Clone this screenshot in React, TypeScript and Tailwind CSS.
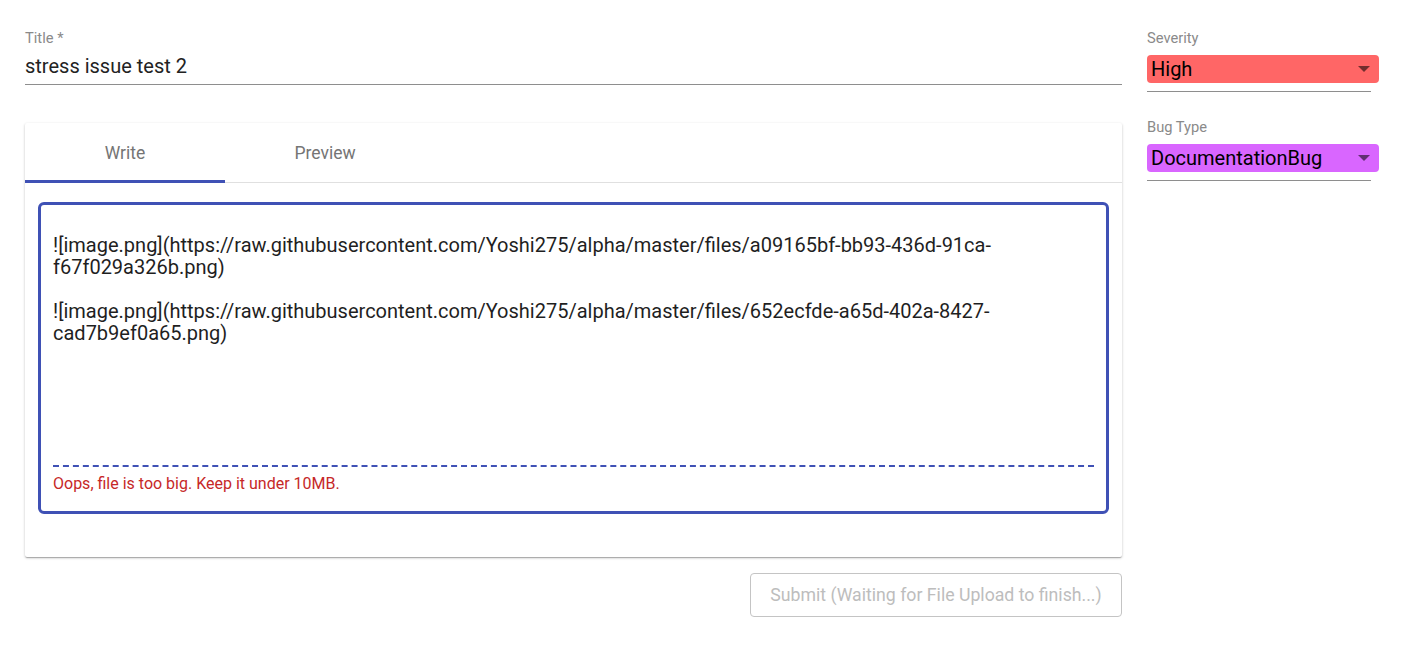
import { useState } from "react";

const font = { fontFamily: "Roboto, 'Liberation Sans', sans-serif" };

function Caret() {
  return (
    <svg width="12" height="6" viewBox="0 0 12 6" className="fill-black/55">
      <path d="M0 0 L12 0 L6 6 Z" />
    </svg>
  );
}

function SelectField({ label, value, bg }: { label: string; value: string; bg: string }) {
  return (
    <div className="flex flex-col w-[232px]">
      <div className="text-[14.7px] leading-[16px] text-[#8a8a8a]">{label}</div>
      <div
        className={`mt-[9px] flex items-center justify-between h-[28px] rounded-[4px] pl-[4px] pr-[9px] ${bg}`}
      >
        <span className="text-[20px] text-black leading-none">{value}</span>
        <Caret />
      </div>
      <div className="mt-[8px] w-[224px] border-b border-[#8e8e8e]" />
    </div>
  );
}

export default function App() {
  const [tab, setTab] = useState(0);

  return (
    <div className="min-h-screen bg-white" style={font}>
      <div className="flex gap-[25px] pl-[25px] pt-[30px]">
        <div className="flex flex-col w-[1097px]">
          <div className="flex flex-col">
            <div className="text-[14.7px] leading-[16px] text-[#8a8a8a]">Title *</div>
            <div className="text-[20px] leading-[24px] text-[#222] pt-[8px] pb-[6px] border-b border-[#8e8e8e]">
              stress issue test 2
            </div>
          </div>

          <div className="mt-[38px] bg-white rounded-[2px] shadow-[0_1px_3px_rgba(0,0,0,0.2),0_1px_1px_rgba(0,0,0,0.14),0_2px_1px_-1px_rgba(0,0,0,0.12)]">
            <div className="flex border-b border-[#e0e0e0] h-[60px]">
              {["Write", "Preview"].map((t, i) => (
                <button
                  key={t}
                  onClick={() => setTab(i)}
                  className={`w-[200px] h-[60px] flex items-center justify-center text-[17.5px] text-[#757575] ${
                    tab === i ? "border-b-[3px] border-[#3f51b5] pt-[3px]" : ""
                  }`}
                >
                  {t}
                </button>
              ))}
            </div>
            <div className="px-[13px] pt-[19px] pb-[43px]">
              <div className="border-[3px] border-[#3f51b5] rounded-[6px] pl-[12px] pr-[12px] pt-[7px] pb-[17px]">
                <div className="text-[20px] leading-[22px] text-[#1f1f1f] h-[253px]">
                  <div>&nbsp;</div>
                  <div>![image.png](https://raw.githubusercontent.com/Yoshi275/alpha/master/files/a09165bf-bb93-436d-91ca-</div>
                  <div>f67f029a326b.png)</div>
                  <div>&nbsp;</div>
                  <div>![image.png](https://raw.githubusercontent.com/Yoshi275/alpha/master/files/652ecfde-a65d-402a-8427-</div>
                  <div>cad7b9ef0a65.png)</div>
                </div>
                <div className="border-t-2 border-dashed border-[#3f51b5]" />
                <div className="text-[16px] leading-[20px] text-[#c62828] pt-[7px]">
                  Oops, file is too big. Keep it under 10MB.
                </div>
              </div>
            </div>
          </div>

          <div className="flex justify-end mt-[16px]">
            <button
              disabled
              className="w-[372px] h-[44px] border border-[#c4c4c4] rounded-[4px] text-[17.7px] text-[#bdbdbd]"
            >
              Submit (Waiting for File Upload to finish...)
            </button>
          </div>
        </div>

        <div className="flex flex-col gap-[27px]">
          <SelectField label="Severity" value="High" bg="bg-[#ff6666]" />
          <SelectField label="Bug Type" value="DocumentationBug" bg="bg-[#d966ff]" />
        </div>
      </div>
    </div>
  );
}
